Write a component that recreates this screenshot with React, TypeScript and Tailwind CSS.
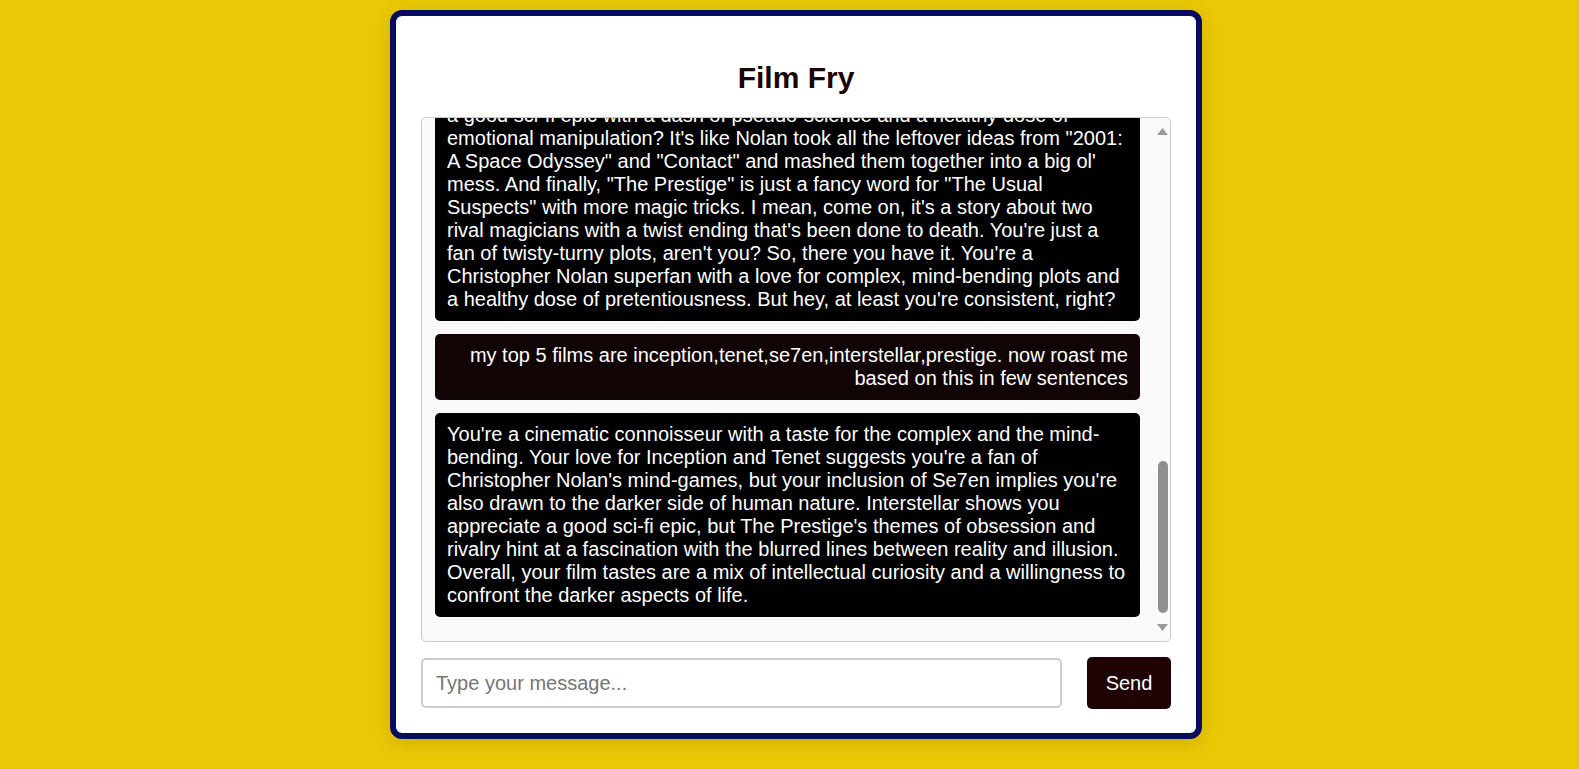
import React, { useLayoutEffect, useRef } from "react";

type Msg = { from: "user" | "bot"; text: React.ReactNode };

const messages: Msg[] = [
  {
    from: "bot",
    text: "Welcome to Film Fry! Tell me your favourite films and I'll roast your taste in movies.",
  },
  {
    from: "user",
    text: "my top 5 films are inception,tenet,se7en,interstellar,prestige. roast me",
  },
  {
    from: "bot",
    text: (
      <>
        Oh boy, where do I even start? Your taste in movies is like a puzzle box that's missing half
        the pieces, except every single piece says "Christopher Nolan" on it. Let's begin with
        "Inception". Ah yes, the film that made an entire generation of film bros think they
        understood dreams because they watched a spinning top wobble for three seconds. I bet you
        still argue with people at parties about whether the top fell over. Spoiler alert: nobody
        cares. Then there's "Tenet", a movie so confusing that even the actors didn't know what was
        going on. You probably watched it four times and pretended you got it on the first try. The
        dialogue was inaudible, the plot was inverted, and your brain was probably running
        backwards too. And "Se7en"? Oh, how edgy. Nothing says "I'm deep and mysterious" like a
        movie about a serial killer and a box. Now, "Interstellar". Don't you just love
        <br />
        a good sci-fi epic with a dash of pseudo-science and a healthy dose of emotional
        manipulation? It's like Nolan took all the leftover ideas from "2001: A Space Odyssey" and
        "Contact" and mashed them together into a big ol' mess. And finally, "The Prestige" is just
        a fancy word for "The Usual Suspects" with more magic tricks. I mean, come on, it's a story
        about two rival magicians with a twist ending that's been done to death. You're just a fan
        of twisty-turny plots, aren't you? So, there you have it. You're a Christopher Nolan
        superfan with a love for complex, mind-bending plots and a healthy dose of pretentiousness.
        But hey, at least you're consistent, right?
      </>
    ),
  },
  {
    from: "user",
    text: "my top 5 films are inception,tenet,se7en,interstellar,prestige. now roast me based on this in few sentences",
  },
  {
    from: "bot",
    text: "You're a cinematic connoisseur with a taste for the complex and the mind-bending. Your love for Inception and Tenet suggests you're a fan of Christopher Nolan's mind-games, but your inclusion of Se7en implies you're also drawn to the darker side of human nature. Interstellar shows you appreciate a good sci-fi epic, but The Prestige's themes of obsession and rivalry hint at a fascination with the blurred lines between reality and illusion. Overall, your film tastes are a mix of intellectual curiosity and a willingness to confront the darker aspects of life.",
  },
];

function ScrollBar() {
  return (
    <div className="flex w-[15px] shrink-0 flex-col bg-[#fafafa]">
      <div className="flex h-[26px] items-center justify-center pt-[1px]">
        <svg width="11" height="7" viewBox="0 0 11 7">
          <polygon points="5.5,0 11,7 0,7" fill="#9a9a9a" />
        </svg>
      </div>
      <div className="flex flex-1 flex-col items-center justify-end pb-[2px]">
        <div className="h-[152px] w-[10px] rounded-full bg-[#8f8f8f]" />
      </div>
      <div className="flex h-[26px] items-center justify-center pb-[1px]">
        <svg width="11" height="7" viewBox="0 0 11 7">
          <polygon points="0,0 11,0 5.5,7" fill="#9a9a9a" />
        </svg>
      </div>
    </div>
  );
}

export default function App() {
  const boxRef = useRef<HTMLDivElement>(null);

  useLayoutEffect(() => {
    const el = boxRef.current;
    if (el) el.scrollTop = el.scrollHeight;
  }, []);

  return (
    <div className="min-h-[769px] bg-[#ebc806] font-['Liberation_Sans',Arial,sans-serif] text-[20px] flex justify-center pl-[13px] pt-[10px] pb-[30px]">
      <div className="w-[812px] rounded-[12px] border-[6px] border-[#080c5c] bg-white px-[25px] pb-[24px] shadow-[0_4px_20px_rgba(0,0,0,0.12)]">
        <h1 className="mt-[45px] mb-[22px] text-center text-[30px] font-bold leading-[34px] text-[#1a0505]">
          Film Fry
        </h1>
        <div className="flex h-[525px] overflow-hidden rounded-[5px] border border-[#cccccc] bg-[#f9f9f9]">
          <div
            ref={boxRef}
            className="flex flex-1 flex-col gap-[13px] overflow-y-auto pl-[13px] pr-[15px] pt-[12px] pb-[24px] [scrollbar-width:none]"
          >
            {messages.map((m, i) => (
              <div
                key={i}
                className={
                  m.from === "user"
                    ? "shrink-0 rounded-[5px] bg-[#110404] px-[12px] py-[10px] text-right leading-[23px] text-white"
                    : "shrink-0 rounded-[5px] bg-black px-[12px] py-[10px] text-left leading-[23px] text-white"
                }
              >
                {m.text}
              </div>
            ))}
          </div>
          <ScrollBar />
        </div>
        <div className="mt-[15px] flex items-center gap-[25px]">
          <input
            type="text"
            placeholder="Type your message..."
            className="h-[50px] flex-1 rounded-[5px] border-2 border-[#cccccc] bg-white px-[13px] text-[20px] text-black placeholder:text-[#757575] outline-none"
          />
          <button className="h-[52px] w-[84px] rounded-[5px] bg-[#200404] text-[20px] text-white">
            Send
          </button>
        </div>
      </div>
    </div>
  );
}
